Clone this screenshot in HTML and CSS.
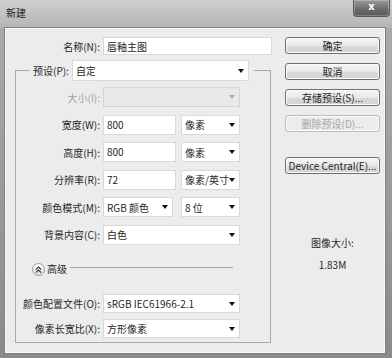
FILE: index.html
```html
<!DOCTYPE html>
<html lang="zh-CN">
<head>
<meta charset="utf-8">
<title>新建</title>
<link rel="stylesheet" href="styles.css">
</head>
<body>
<div class="window">
  <div class="titlebar">
    <span class="title">新建</span>
    <span class="close">x</span>
  </div>
  <div class="client">
    <div class="main">
      <div class="row name-row">
        <span class="lbl lbl-name">名称(N):</span>
        <div class="field w-name">唇釉主图</div>
      </div>
      <fieldset class="group">
        <legend class="preset">
          <span class="lbl-preset">预设(P):</span>
          <div class="field select w-preset"><span>自定</span><i class="arrow"></i></div>
        </legend>
        <div class="row first">
          <span class="lbl disabled">大小(I):</span>
          <div class="field select w-full off"><span></span><i class="arrow"></i></div>
        </div>
        <div class="row">
          <span class="lbl">宽度(W):</span>
          <div class="field w-num">800</div>
          <div class="field select w-unit"><span>像素</span><i class="arrow"></i></div>
        </div>
        <div class="row">
          <span class="lbl">高度(H):</span>
          <div class="field w-num">800</div>
          <div class="field select w-unit"><span>像素</span><i class="arrow"></i></div>
        </div>
        <div class="row">
          <span class="lbl">分辨率(R):</span>
          <div class="field w-num">72</div>
          <div class="field select w-unit"><span>像素/英寸</span><i class="arrow"></i></div>
        </div>
        <div class="row">
          <span class="lbl">颜色模式(M):</span>
          <div class="field select w-mode"><span>RGB 颜色</span><i class="arrow"></i></div>
          <div class="field select w-unit"><span>8 位</span><i class="arrow"></i></div>
        </div>
        <div class="row">
          <span class="lbl">背景内容(C):</span>
          <div class="field select w-full"><span>白色</span><i class="arrow"></i></div>
        </div>
        <div class="adv">
          <span class="toggle">
            <svg width="7" height="7" viewBox="0 0 7 7"><polyline points="0.8,3.6 3.5,1 6.2,3.6" fill="none" stroke="#333" stroke-width="1.1"/><polyline points="0.8,6.6 3.5,4 6.2,6.6" fill="none" stroke="#333" stroke-width="1.1"/></svg>
          </span>
          <span class="adv-text">高级</span>
          <span class="adv-line"></span>
        </div>
        <div class="row short profile">
          <span class="lbl">颜色配置文件(O):</span>
          <div class="field select w-full"><span>sRGB IEC61966-2.1</span><i class="arrow"></i></div>
        </div>
        <div class="row short">
          <span class="lbl">像素长宽比(X):</span>
          <div class="field select w-full"><span>方形像素</span><i class="arrow"></i></div>
        </div>
      </fieldset>
    </div>
    <div class="side">
      <button class="btn">确定</button>
      <button class="btn">取消</button>
      <button class="btn">存储预设(S)...</button>
      <button class="btn" disabled>删除预设(D)...</button>
      <button class="btn device">Device Central(E)...</button>
      <div class="info">
        <div class="info-title">图像大小:</div>
        <div class="info-size">1.83M</div>
      </div>
    </div>
  </div>
</div>
</body>
</html>
```
FILE: styles.css
```css
html, body {
  margin: 0;
  padding: 0;
  background: #ffffff;
}

body {
  font-family: "Noto Sans CJK SC", "Noto Sans", sans-serif;
  font-size: 10px;
  color: #262626;
}

.window {
  width: 392px;
  height: 358px;
  box-sizing: border-box;
  padding: 0 7px 5px 5px;
  display: flex;
  flex-direction: column;
  background: linear-gradient(to bottom, #adadad, #8a8a8a);
}

.titlebar {
  height: 28px;
  flex: none;
  margin: 0 -7px 0 -5px;
  display: flex;
  align-items: flex-start;
  background: linear-gradient(to bottom, #cfcfcf, #b4b4b4);
}

.title {
  margin: 6px 0 0 6px;
  line-height: 14px;
  color: #1f1f1f;
}

.close {
  margin-left: auto;
  margin-right: 2px;
  width: 37px;
  height: 17px;
  box-sizing: border-box;
  border: 1px solid #5a5a5a;
  border-top: none;
  border-radius: 0 0 4px 4px;
  background: linear-gradient(to bottom, #9a9a9a, #6a6a6a 60%, #585858);
  box-shadow: inset 0 0 0 1px rgba(255,255,255,0.25);
  color: #ffffff;
  font-family: "DejaVu Sans", sans-serif;
  font-weight: bold;
  font-size: 10px;
  line-height: 14px;
  text-align: center;
}

.client {
  flex: 1;
  display: flex;
  background: #ececec;
  border: 1px solid #fafafa;
  box-shadow: 0 0 0 1px #7e7e7e;
}

.main {
  width: 266px;
  box-sizing: border-box;
  padding: 8px 0 0 9px;
}

.row {
  display: flex;
  align-items: center;
  height: 20px;
  margin-top: 7.5px;
}

.row.first {
  margin-top: 6px;
}

.name-row {
  margin-top: 0;
  height: 18px;
}

.lbl {
  width: 84px;
  margin-right: 3px;
  text-align: right;
  white-space: nowrap;
}

.lbl-name {
  width: 85px;
}

.disabled {
  color: #a3a3a3;
}

.field {
  height: 100%;
  box-sizing: border-box;
  background: #ffffff;
  border: 1px solid #d9d9d9;
  padding: 0 4px 0 3px;
  line-height: 17px;
  white-space: nowrap;
}

.select {
  display: flex;
  align-items: center;
  justify-content: space-between;
}

.arrow {
  width: 0;
  height: 0;
  border-left: 3px solid transparent;
  border-right: 3px solid transparent;
  border-top: 4px solid #111111;
}

.off {
  background: #e9e9e9;
  border-color: #d4d4d4;
}

.off .arrow {
  border-top-color: #a9a9a9;
}

.w-name { width: 169px; }
.w-preset { width: 177px; height: 21px; }
.w-full { width: 137px; }
.w-num { width: 73px; margin-right: 5px; }
.w-unit { width: 59px; }
.w-mode { width: 70px; margin-right: 8px; }

.group {
  width: 256px;
  box-sizing: border-box;
  margin: 5px 0 0 0;
  padding: 0 0 4px 0;
  border: 1px solid #a9a9a9;
  min-inline-size: 0;
}

.preset {
  display: flex;
  align-items: center;
  margin-left: 14px;
  padding: 0 5px 0 3px;
  height: 21px;
}

.lbl-preset {
  margin-right: 3px;
  white-space: nowrap;
}

.adv {
  display: flex;
  align-items: center;
  height: 14px;
  margin: 17.5px 37px 0 16px;
}

.toggle {
  width: 13px;
  height: 13px;
  box-sizing: border-box;
  border: 1px solid #9c9c9c;
  border-radius: 50%;
  background: linear-gradient(to bottom, #ffffff, #dedede);
  display: flex;
  align-items: center;
  justify-content: center;
}

.adv-text {
  margin-left: 2px;
  line-height: 14px;
}

.adv-line {
  flex: 1;
  height: 1px;
  margin: 0 0 3px 3px;
  background: #a3a3a3;
}

.row.short {
  height: 19px;
  margin-top: 6px;
}

.row.profile {
  margin-top: 18px;
}

.side {
  width: 95px;
  margin-left: 13px;
  padding-top: 8px;
  display: flex;
  flex-direction: column;
}

.btn {
  height: 17px;
  margin: 0 0 9px 0;
  padding: 0;
  box-sizing: border-box;
  border: 1px solid #6f6f6f;
  border-radius: 3px;
  background: linear-gradient(to bottom, #f6f6f6, #e8e8e8 50%, #dadada 51%, #d4d4d4);
  box-shadow: inset 0 0 0 1px #fbfbfb;
  font-family: inherit;
  font-size: 10px;
  color: #262626;
  line-height: 15px;
  text-align: center;
}

.btn:disabled {
  border-color: #bcbcbc;
  background: #ececec;
  color: #a6a6a6;
}

.device {
  margin-top: 16px;
}

.info {
  margin-top: 53px;
  text-align: center;
  line-height: 14px;
}

.info-size {
  margin-top: 8px;
}
```
